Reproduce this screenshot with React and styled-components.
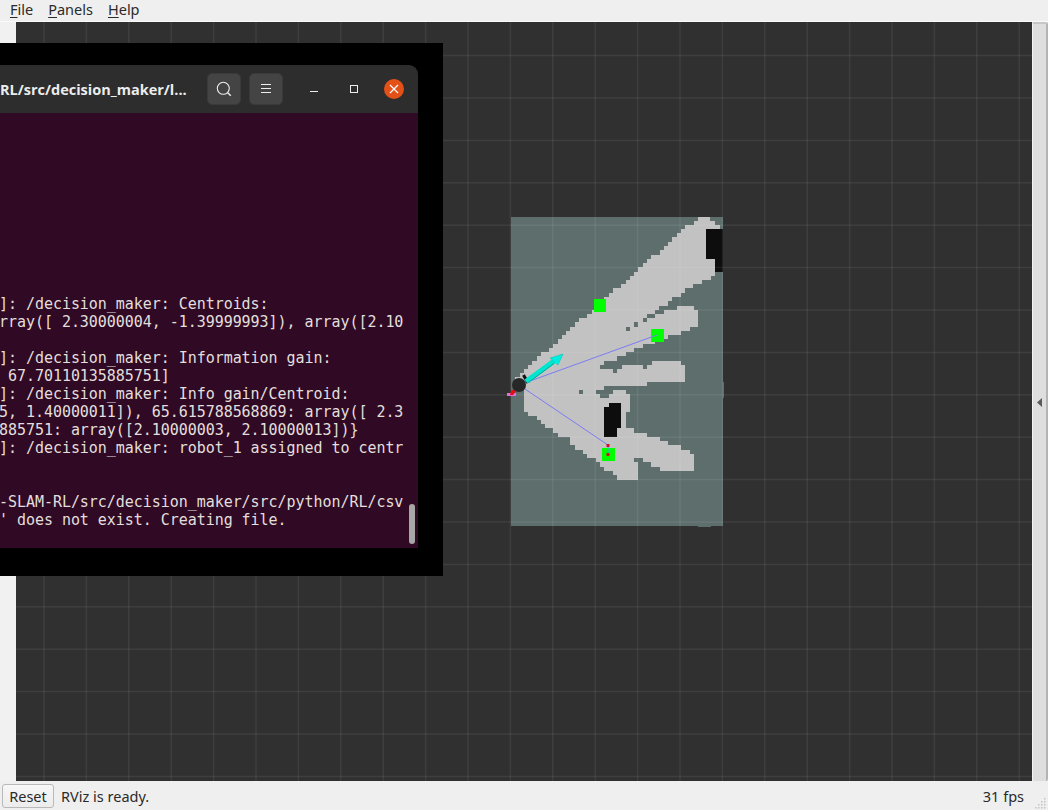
import React from "react";
import styled, { createGlobalStyle } from "styled-components";

const GlobalStyle = createGlobalStyle`
  html, body {
    margin: 0;
    padding: 0;
    background: #efefef;
    overflow: hidden;
  }
`;

const Page = styled.div`
  position: relative;
  width: 1048px;
  height: 810px;
  display: flex;
  flex-direction: column;
  overflow: hidden;
  background: #efefef;
  color: #2a2a2a;
  font-family: "Noto Sans", "Open Sans", sans-serif;
  font-size: 14.5px;
`;

const MenuBar = styled.div`
  height: 22px;
  flex: none;
  display: flex;
  gap: 15px;
  padding: 0 0 2px 10px;
  align-items: center;
  box-sizing: border-box;
  background: #efefef;
  border-bottom: 1px solid #fafafa;
`;

const MenuItem = styled.span`
  line-height: 19px;
  u {
    text-underline-offset: 2px;
  }
`;

const Middle = styled.div`
  flex: 1;
  min-height: 0;
  display: flex;
`;

const LeftDock = styled.div`
  width: 16px;
  flex: none;
  background: #f1f1f1;
`;

const Viewport = styled.div`
  flex: 1;
  min-width: 0;
  background: #303030;
  svg {
    display: block;
  }
`;

const SideHandle = styled.div`
  width: 16px;
  flex: none;
  box-sizing: border-box;
  display: flex;
  align-items: center;
  justify-content: center;
  background: #dedede;
  border-top: 2px solid #c6c6c6;
  border-left: 1px solid #f4f4f4;
  border-right: 2px solid #b4b4b4;
  border-radius: 2px;
`;

const StatusBar = styled.div`
  height: 29px;
  flex: none;
  position: relative;
  display: flex;
  align-items: center;
  padding: 0 24px 0 2px;
  box-sizing: border-box;
`;

const ResetButton = styled.button`
  width: 52px;
  height: 24px;
  padding: 0;
  margin-right: 7px;
  border: 1px solid #b9b9b9;
  border-radius: 3px;
  background: linear-gradient(#f7f7f7, #ececec);
  color: #2a2a2a;
  font: inherit;
`;

const StatusText = styled.span`
  flex: 1;
`;

const Fps = styled.span``;

const SizeGrip = styled.svg`
  position: absolute;
  right: 1px;
  bottom: 1px;
`;

const TerminalFrame = styled.div`
  position: absolute;
  left: 0;
  top: 43px;
  width: 443px;
  height: 533px;
  box-sizing: border-box;
  padding: 22px 25px 28px 0;
  background: #000;
`;

const TerminalWindow = styled.div`
  position: relative;
  height: 100%;
  display: flex;
  flex-direction: column;
  overflow: hidden;
  border-top-right-radius: 9px;
`;

const TitleBar = styled.div`
  height: 48px;
  flex: none;
  display: flex;
  align-items: center;
  background: #2d2d2d;
  color: #ececec;
`;

const Title = styled.div`
  width: 207px;
  flex: none;
  font-family: "Open Sans", "Noto Sans", sans-serif;
  font-weight: 700;
  font-size: 14.5px;
  white-space: pre;
  overflow: hidden;
`;

const HeaderButton = styled.div`
  width: 34px;
  height: 32px;
  flex: none;
  box-sizing: border-box;
  margin-right: 8px;
  display: flex;
  align-items: center;
  justify-content: center;
  background: #444;
  border: 1px solid #3a3a3a;
  border-radius: 5px;
`;

const WindowButton = styled.div`
  width: 20px;
  height: 20px;
  flex: none;
  display: flex;
  align-items: center;
  justify-content: center;
  margin-left: ${(p) => p.$gap}px;
  border-radius: 50%;
  background: ${(p) => (p.$close ? "#e45118" : "transparent")};
`;

const TerminalBody = styled.div`
  flex: 1;
  min-height: 0;
  box-sizing: border-box;
  padding-top: 182px;
  background: #300a24;
  color: #e2dfdc;
  font-family: "DejaVu Sans Mono", "Liberation Mono", monospace;
  font-size: 15px;
  letter-spacing: -0.045px;
  line-height: 18px;
`;

const TerminalLine = styled.div`
  height: 18px;
  margin-left: -1px;
  white-space: pre;
`;

const ScrollThumb = styled.div`
  position: absolute;
  right: 3px;
  bottom: 4px;
  width: 6px;
  height: 40px;
  border-radius: 3px;
  background: #a8a6a7;
`;

const lines = [
  "]: /decision_maker: Centroids:",
  "rray([ 2.30000004, -1.39999993]), array([2.10",
  "",
  "]: /decision_maker: Information gain:",
  " 67.70110135885751]",
  "]: /decision_maker: Info gain/Centroid:",
  "5, 1.40000011]), 65.615788568869: array([ 2.3",
  "885751: array([2.10000003, 2.10000013])}",
  "]: /decision_maker: robot_1 assigned to centr",
  "",
  "",
  "-SLAM-RL/src/decision_maker/src/python/RL/csv",
  "' does not exist. Creating file.",
];

// occupancy rows read off the map: [y, x0, x1, x2, x3 ...], in 3x crop coordinates
const upperRows = [
  [36, 595, 630], [48, 582, 645], [60, 555, 660], [72, 543, 645], [84, 530, 645],
  [97, 517, 645], [110, 504, 645], [122, 492, 645], [135, 479, 645], [150, 453, 645],
  [162, 441, 645], [175, 428, 645], [187, 415, 645], [200, 402, 645], [213, 390, 632],
  [225, 377, 606], [238, 364, 580], [250, 339, 555], [263, 326, 542], [276, 313, 516],
  [289, 300, 503], [302, 287, 478, 530, 582], [315, 275, 465, 492, 595],
  [327, 262, 440, 465, 595], [340, 237, 430, 440, 595], [352, 224, 403, 415, 595],
  [365, 211, 378, 390, 570], [378, 198, 544], [390, 186, 505], [403, 173, 465],
  [416, 160, 430], [429, 147, 402], [441, 123, 377], [454, 110, 352],
  [467, 97, 312, 455, 542], [480, 0, 0],
];

const lowerRows = [
  [0, 84, 300, 365, 430, 441, 555], [12, 72, 340, 352, 555], [25, 60, 555], [37, 45, 555],
  [50, 45, 441], [62, 45, 312], [75, 72, 237, 249, 288, 340, 378], [88, 72, 300, 327, 390],
  [100, 72, 390], [113, 72, 390], [126, 72, 390], [140, 85, 378], [152, 110, 378],
  [165, 123, 378], [178, 135, 378], [190, 160, 402], [203, 173, 441], [216, 210, 480],
  [228, 210, 504], [241, 225, 542], [254, 250, 569], [267, 262, 582],
  [280, 288, 402, 430, 582], [292, 300, 415, 453, 582], [305, 312, 415, 480, 582],
  [318, 339, 415], [331, 352, 415], [344, 0, 0],
];

const rowRects = (rows, top) =>
  rows.slice(0, -1).flatMap((row, i) => {
    const y = top + row[0] / 3;
    const h = (rows[i + 1][0] - row[0]) / 3;
    const spans = [];
    for (let k = 1; k < row.length; k += 2) {
      spans.push(
        <rect
          key={`${top}-${i}-${k}`}
          x={500 + row[k] / 3}
          y={y}
          width={(row[k + 1] - row[k]) / 3}
          height={h}
        />
      );
    }
    return spans;
  });

const gridX = Array.from({ length: 24 }, (_, i) => 44 + i * 42.4);
const gridY = Array.from({ length: 18 }, (_, i) => 55.6 + i * 42.4);

const Scene = () => (
  <svg width="1016" height="759" viewBox="16 22 1016 759">
    <g shapeRendering="crispEdges">
      <rect x="511" y="217" width="212" height="309" fill="#5d6e6c" />
      <rect x="698" y="526" width="13" height="1" fill="#5d6e6c" />
      <rect x="723" y="382" width="1" height="16" fill="#5d6e6c" />
      <g fill="#c2c2c2">
        {rowRects(upperRows, 205)}
        {rowRects(lowerRows, 365)}
      </g>
      <g fill="#0d0d0d">
        <rect x="706" y="229" width="17" height="30" />
        <rect x="715" y="259" width="8" height="13" />
        <rect x="609" y="403" width="12" height="4" />
        <rect x="604" y="407" width="17" height="21" />
        <rect x="604" y="428" width="13" height="9" />
      </g>
    </g>
    <g stroke="#fff" strokeOpacity="0.07" strokeWidth="1.5">
      {gridX.map((x) => (
        <line key={x} x1={x} x2={x} y1="22" y2="781" />
      ))}
      {gridY.map((y) => (
        <line key={y} x1="16" x2="1032" y1={y} y2={y} />
      ))}
    </g>
    <g shapeRendering="crispEdges" fill="#00ff00">
      <rect x="594" y="299" width="12" height="13" />
      <rect x="651" y="329" width="13" height="13" />
      <rect x="602" y="448" width="13" height="13" />
    </g>
    <g stroke="#7c7cf2" strokeWidth="1" fill="none">
      <line x1="519" y1="385" x2="657" y2="335" />
      <line x1="519" y1="385" x2="608" y2="445" />
    </g>
    <line x1="608" y1="445" x2="608" y2="454" stroke="#25b4d8" strokeWidth="1.2" />
    <rect x="606.5" y="444" width="3" height="3" fill="#d81020" />
    <rect x="606.5" y="453" width="3" height="3" fill="#d81020" />
    <rect x="507" y="393" width="9" height="3" fill="#e070d8" />
    <path d="M510 395 L511 391 L514 389 L516 391 L513 395 Z" fill="#e01010" />
    <circle cx="519" cy="385" r="7" fill="#272727" />
    <line x1="523.5" y1="375" x2="528" y2="383" stroke="#111" strokeWidth="3" />
    <line x1="526" y1="381.5" x2="554" y2="361" stroke="#00e5d0" strokeWidth="5" />
    <path d="M550 358 L563 354 L558 365 Z" fill="#00eedd" stroke="#00c0b0" strokeWidth="0.5" />
    <line x1="529" y1="382" x2="554" y2="363.5" stroke="#00a89c" strokeWidth="1" />
  </svg>
);

const SearchIcon = () => (
  <svg width="16" height="16" viewBox="0 0 16 16" fill="none" stroke="#eee" strokeWidth="1.1">
    <circle cx="7.3" cy="7.3" r="6" />
    <path d="M11.7 11.7 L14.8 14.8" strokeWidth="1.4" />
  </svg>
);

const MenuIcon = () => (
  <svg width="12" height="12" viewBox="0 0 12 12" stroke="#eee" strokeWidth="1" shapeRendering="crispEdges">
    <path d="M1 1.5 H11 M1 5.5 H11 M1 9.5 H11" />
  </svg>
);

const MinimizeIcon = () => (
  <svg width="10" height="10" viewBox="0 0 10 10">
    <rect x="1" y="7" width="8" height="1" fill="#eee" />
  </svg>
);

const MaximizeIcon = () => (
  <svg width="10" height="10" viewBox="0 0 10 10" fill="none" stroke="#eee" shapeRendering="crispEdges">
    <rect x="1.5" y="1.5" width="7" height="7" />
  </svg>
);

const CloseIcon = () => (
  <svg width="10" height="10" viewBox="0 0 10 10" stroke="#fff" strokeWidth="1.2">
    <path d="M1 1 L9 9 M9 1 L1 9" />
  </svg>
);

const SideArrow = () => (
  <svg width="5" height="9" viewBox="0 0 5 9">
    <path d="M0 4.5 L5 0 V9 Z" fill="#5a5a5a" />
  </svg>
);

const Grip = () => (
  <SizeGrip width="12" height="12" viewBox="0 0 12 12" fill="#c4c4c4">
    {[[9, 1], [6, 4], [9, 4], [3, 7], [6, 7], [9, 7], [0, 10], [3, 10], [6, 10], [9, 10]].map(([x, y]) => (
      <rect key={`${x}-${y}`} x={x} y={y} width="1.5" height="1.5" />
    ))}
  </SizeGrip>
);

const App = () => (
  <Page>
    <GlobalStyle />
    <MenuBar>
      <MenuItem><u>F</u>ile</MenuItem>
      <MenuItem><u>P</u>anels</MenuItem>
      <MenuItem><u>H</u>elp</MenuItem>
    </MenuBar>
    <Middle>
      <LeftDock />
      <Viewport>
        <Scene />
      </Viewport>
      <SideHandle>
        <SideArrow />
      </SideHandle>
    </Middle>
    <StatusBar>
      <ResetButton>Reset</ResetButton>
      <StatusText>RViz is ready.</StatusText>
      <Fps>31 fps</Fps>
      <Grip />
    </StatusBar>
    <TerminalFrame>
      <TerminalWindow>
        <TitleBar>
          <Title>RL/src/decision_maker/l...</Title>
          <HeaderButton><SearchIcon /></HeaderButton>
          <HeaderButton><MenuIcon /></HeaderButton>
          <WindowButton $gap={13}><MinimizeIcon /></WindowButton>
          <WindowButton $gap={20}><MaximizeIcon /></WindowButton>
          <WindowButton $gap={20} $close><CloseIcon /></WindowButton>
        </TitleBar>
        <TerminalBody>
          {lines.map((line, i) => (
            <TerminalLine key={i}>{line}</TerminalLine>
          ))}
        </TerminalBody>
        <ScrollThumb />
      </TerminalWindow>
    </TerminalFrame>
  </Page>
);

export default App;
